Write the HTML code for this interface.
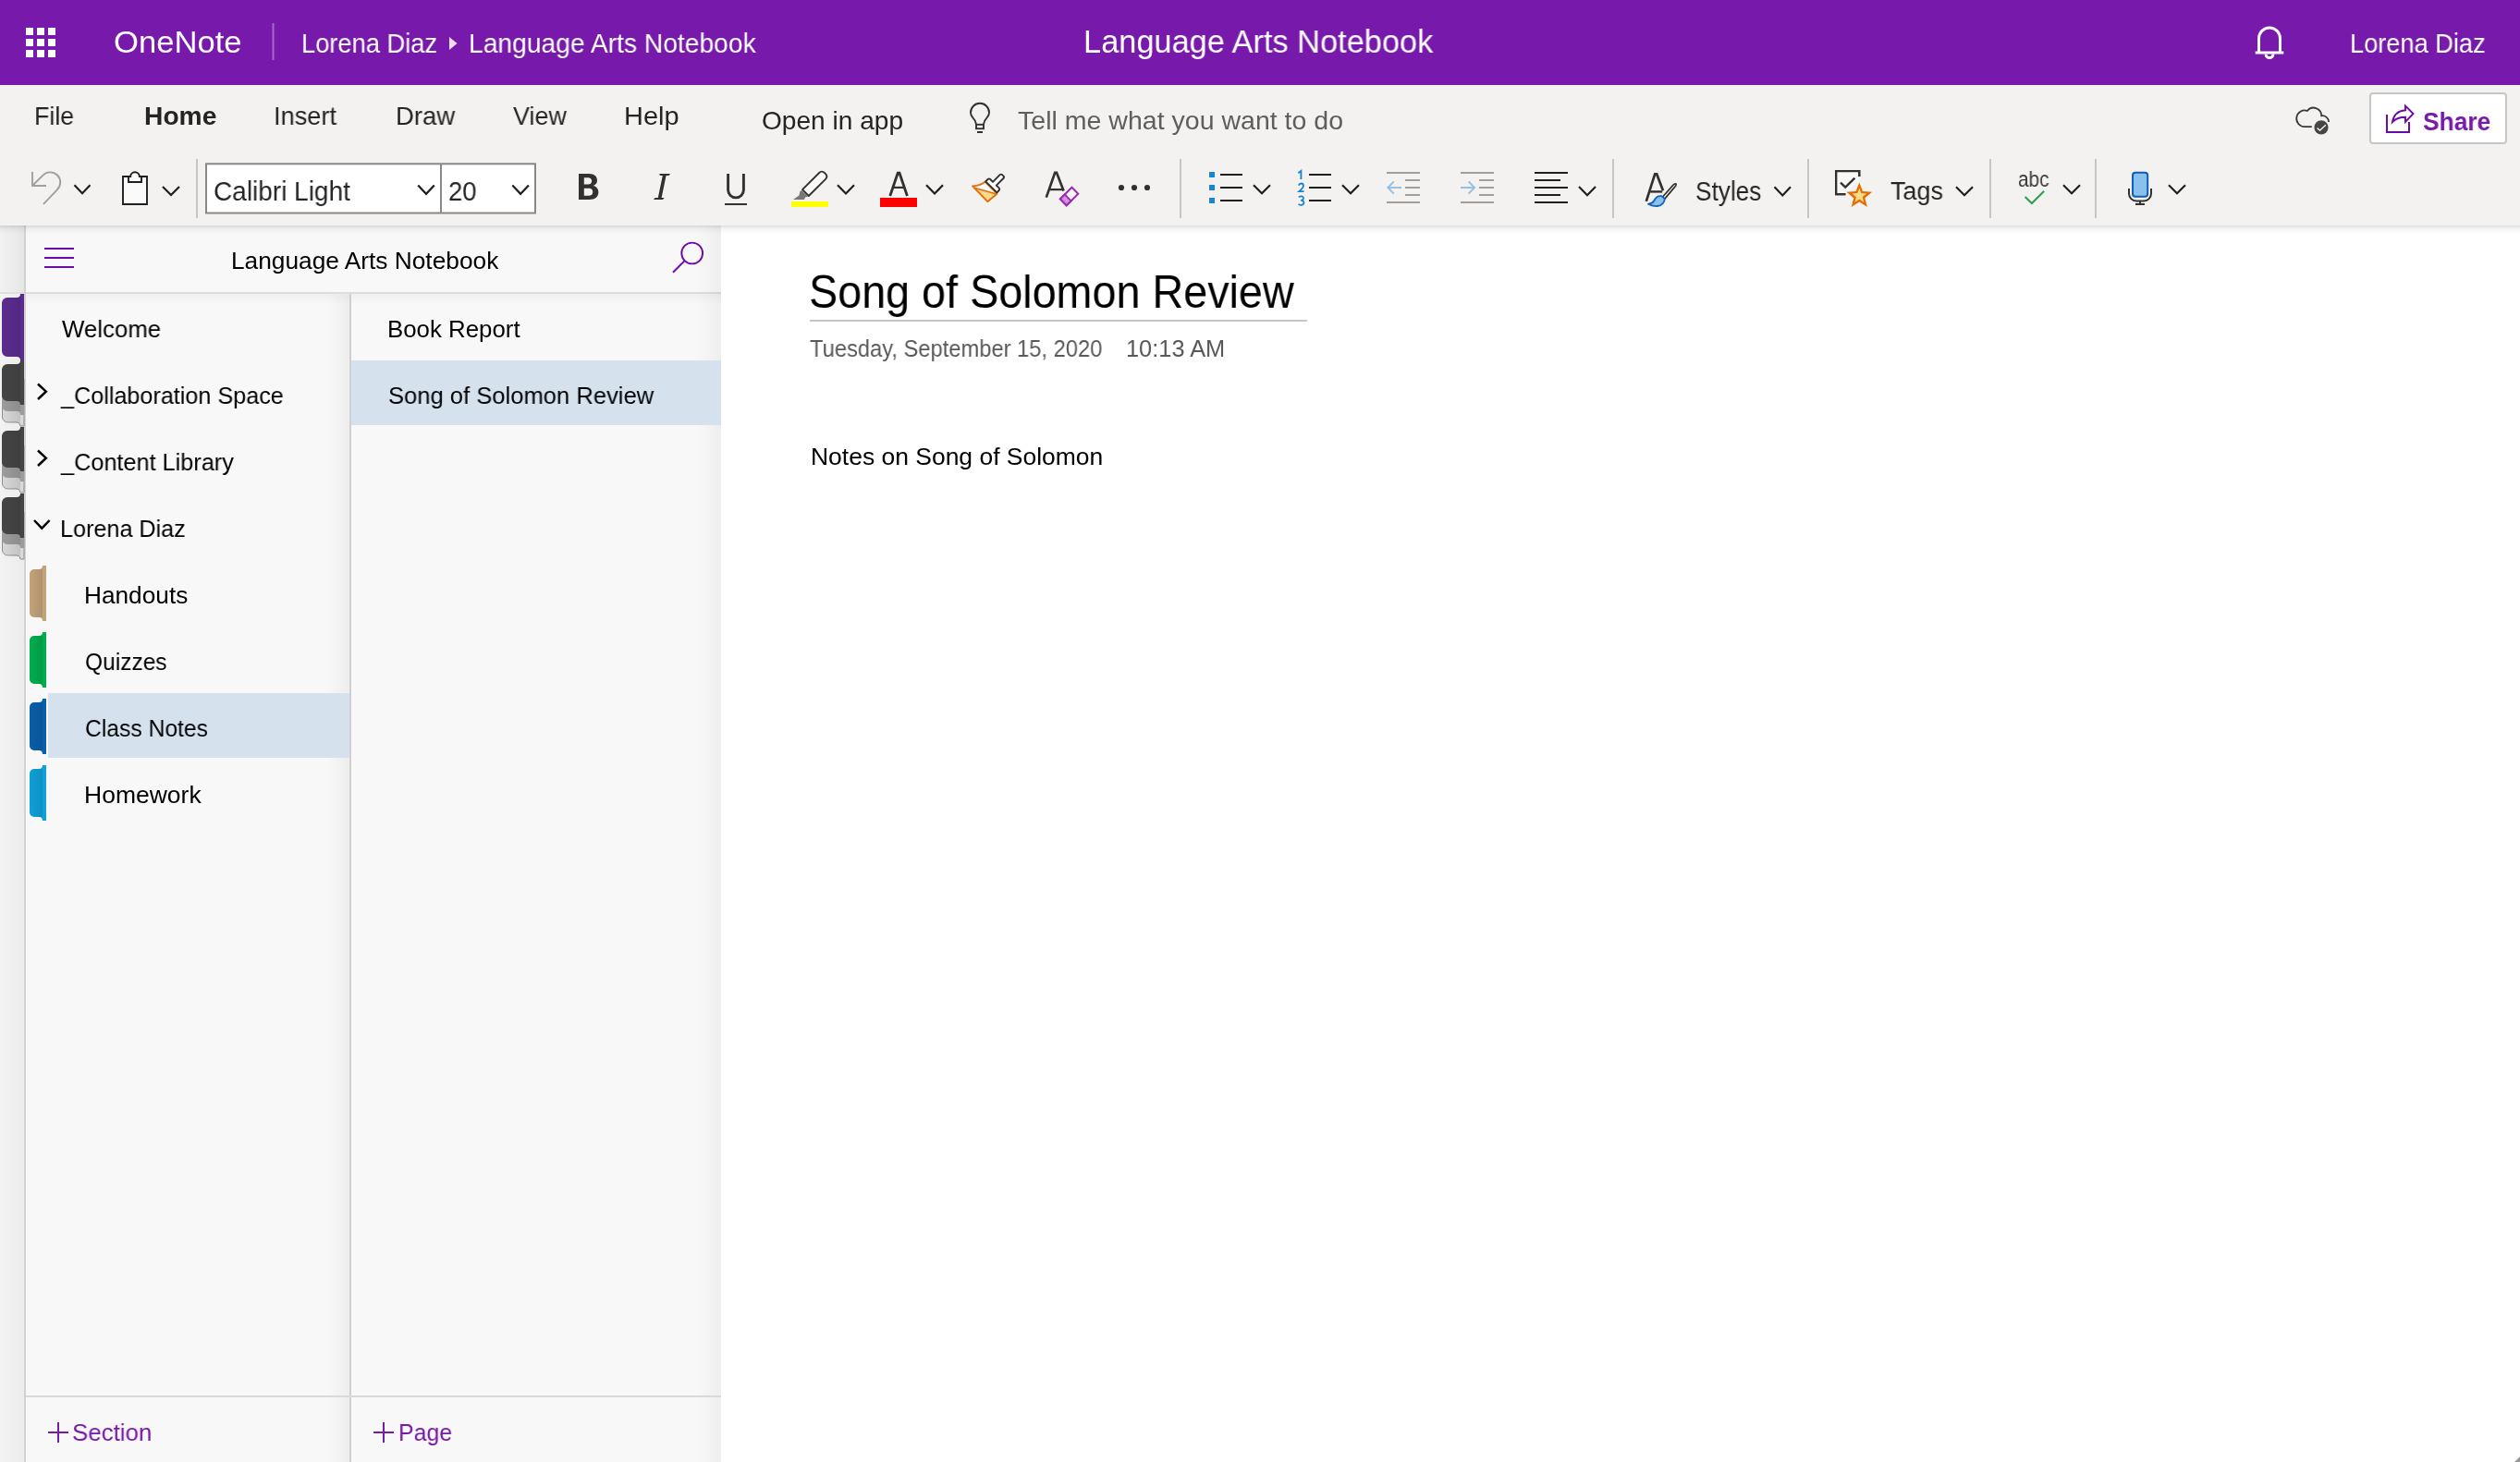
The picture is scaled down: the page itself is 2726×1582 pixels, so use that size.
<!DOCTYPE html><html><head><meta charset='utf-8'><style>
*{margin:0;padding:0;box-sizing:border-box}
html,body{width:2726px;height:1582px;overflow:hidden;background:#fff;font-family:'Liberation Sans',sans-serif}
.a{position:absolute}
.t{position:absolute;white-space:nowrap;transform-origin:0 0;will-change:transform}
svg{position:absolute;overflow:visible}
</style></head><body>
<div class="a" style="left:0;top:0;width:2726px;height:92px;background:#7719aa"></div>
<div class="a" style="left:0;top:92px;width:2726px;height:152px;background:#f3f2f1"></div>
<!-- left rail -->
<div class="a" style="left:0;top:244px;width:26px;height:1338px;background:linear-gradient(90deg,#f2f2f2,#e6e6e6)"></div>
<div class="a" style="left:0;top:318px;width:26px;height:1264px;background:linear-gradient(90deg,#f3f3f3,#ececec)"></div>
<div class="a" style="left:0;top:316px;width:26px;height:2px;background:#dedede"></div>
<div class="a" style="left:26px;top:244px;width:2px;height:1338px;background:#d2d2d2"></div>
<!-- nav pane -->
<div class="a" style="left:28px;top:244px;width:752px;height:1338px;background:#f8f8f8"></div>
<div class="a" style="left:28px;top:316px;width:752px;height:2px;background:#dddddd"></div>
<div class="a" style="left:28px;top:318px;width:752px;height:12px;background:linear-gradient(180deg,rgba(0,0,0,0.035),rgba(0,0,0,0))"></div>
<div class="a" style="left:354px;top:318px;width:24px;height:1264px;background:linear-gradient(90deg,rgba(0,0,0,0),rgba(0,0,0,0.045))"></div>
<div class="a" style="left:378px;top:318px;width:2px;height:1264px;background:#d0d0d0"></div>
<div class="a" style="left:754px;top:244px;width:26px;height:1338px;background:linear-gradient(90deg,rgba(0,0,0,0),rgba(0,0,0,0.045))"></div>
<div class="a" style="left:28px;top:1510px;width:752px;height:2px;background:#d9d9d9"></div>
<!-- selected rows -->
<div class="a" style="left:52px;top:750px;width:326px;height:70px;background:#d5e2ee"></div>
<div class="a" style="left:380px;top:390px;width:400px;height:70px;background:#d5e2ee"></div>
<!-- ribbon shadow -->
<div class="a" style="left:0;top:244px;width:2726px;height:9px;background:linear-gradient(180deg,rgba(0,0,0,0.13),rgba(0,0,0,0.04) 40%,rgba(0,0,0,0))"></div>
<!-- title underline -->
<div class="a" style="left:876px;top:346px;width:538px;height:2px;background:#c4c6ca"></div>
<svg width="2726" height="1582" viewBox="0 0 2726 1582" style="left:0;top:0;position:absolute"><rect x="2564" y="101" width="147" height="54" rx="3" fill="#fff" stroke="#c8c6c4" stroke-width="2"/>
<rect x="223" y="177.3" width="356" height="53.2" fill="#fff" stroke="#8a8886" stroke-width="2"/></svg>
<div class="t" id="onenote" style="left:122.61px;top:29.31px;font-size:33.89px;line-height:33.89px;color:#fff;transform:scaleX(1.0221);">OneNote</div>
<div class="t" id="bc1" style="left:326.01px;top:33.31px;font-size:28.61px;line-height:28.61px;color:#fff;transform:scaleX(0.9533);">Lorena Diaz</div>
<div class="t" id="bc2" style="left:506.74px;top:33.31px;font-size:28.61px;line-height:28.61px;color:#fff;transform:scaleX(0.9862);">Language Arts Notebook</div>
<div class="t" id="center" style="left:1172.25px;top:28.01px;font-size:34.44px;line-height:34.44px;color:#fff;transform:scaleX(0.9983);">Language Arts Notebook</div>
<div class="t" id="user" style="left:2541.82px;top:33.31px;font-size:28.61px;line-height:28.61px;color:#fff;transform:scaleX(0.9507);">Lorena Diaz</div>
<div class="t" id="t_file" style="left:36.86px;top:112.00px;font-size:27.78px;line-height:27.78px;color:#252423;transform:scaleX(0.9631);">File</div>
<div class="t" id="t_home" style="left:156.31px;top:111.01px;font-size:28.19px;line-height:28.19px;color:#252423;font-weight:700;transform:scaleX(1.0013);">Home</div>
<div class="t" id="t_insert" style="left:295.94px;top:112.00px;font-size:27.78px;line-height:27.78px;color:#252423;transform:scaleX(0.9788);">Insert</div>
<div class="t" id="t_draw" style="left:427.59px;top:112.00px;font-size:27.78px;line-height:27.78px;color:#252423;transform:scaleX(0.9903);">Draw</div>
<div class="t" id="t_view" style="left:555.00px;top:112.00px;font-size:27.78px;line-height:27.78px;color:#252423;transform:scaleX(0.9679);">View</div>
<div class="t" id="t_help" style="left:675.08px;top:112.00px;font-size:27.78px;line-height:27.78px;color:#252423;transform:scaleX(1.0428);">Help</div>
<div class="t" id="t_open" style="left:823.87px;top:117.00px;font-size:27.78px;line-height:27.78px;color:#252423;transform:scaleX(1.0118);">Open in app</div>
<div class="t" id="tellme" style="left:1100.63px;top:116.72px;font-size:27.92px;line-height:27.92px;color:#605e5c;transform:scaleX(1.0224);">Tell me what you want to do</div>
<div class="t" id="share" style="left:2621.47px;top:116.51px;font-size:28.47px;line-height:28.47px;color:#7719aa;font-weight:700;transform:scaleX(0.9254);">Share</div>
<div class="t" id="fontname" style="left:231.40px;top:192.50px;font-size:28.89px;line-height:28.89px;color:#252423;transform:scaleX(0.9698);">Calibri Light</div>
<div class="t" id="fontsize" style="left:485.42px;top:192.50px;font-size:28.89px;line-height:28.89px;color:#252423;transform:scaleX(0.9516);">20</div>
<div class="t" id="styles" style="left:1833.95px;top:193.01px;font-size:29.17px;line-height:29.17px;color:#252423;transform:scaleX(0.8995);">Styles</div>
<div class="t" id="tags" style="left:2045.46px;top:192.01px;font-size:28.19px;line-height:28.19px;color:#252423;transform:scaleX(0.9563);">Tags</div>
<div class="t" id="navtitle" style="left:249.90px;top:269.71px;font-size:25.42px;line-height:25.42px;color:#000;transform:scaleX(1.0343);">Language Arts Notebook</div>
<div class="t" id="s_welcome" style="left:66.60px;top:344.01px;font-size:25.97px;line-height:25.97px;color:#000;transform:scaleX(0.9941);">Welcome</div>
<div class="t" id="s_collab" style="left:66.10px;top:416.01px;font-size:25.97px;line-height:25.97px;color:#000;transform:scaleX(0.9697);">_Collaboration Space</div>
<div class="t" id="s_content" style="left:66.30px;top:488.01px;font-size:25.97px;line-height:25.97px;color:#000;transform:scaleX(0.9733);">_Content Library</div>
<div class="t" id="s_lorena" style="left:65.19px;top:560.01px;font-size:25.97px;line-height:25.97px;color:#000;transform:scaleX(0.9699);">Lorena Diaz</div>
<div class="t" id="s_handouts" style="left:90.90px;top:632.01px;font-size:25.97px;line-height:25.97px;color:#000;transform:scaleX(1.0100);">Handouts</div>
<div class="t" id="s_quizzes" style="left:92.02px;top:704.01px;font-size:25.97px;line-height:25.97px;color:#000;transform:scaleX(0.9435);">Quizzes</div>
<div class="t" id="s_class" style="left:91.77px;top:776.01px;font-size:25.97px;line-height:25.97px;color:#000;transform:scaleX(0.9498);">Class Notes</div>
<div class="t" id="s_homework" style="left:90.88px;top:848.01px;font-size:25.97px;line-height:25.97px;color:#000;transform:scaleX(1.0205);">Homework</div>
<div class="t" id="p_book" style="left:418.53px;top:344.00px;font-size:25.69px;line-height:25.69px;color:#000;transform:scaleX(1.0055);">Book Report</div>
<div class="t" id="p_song" style="left:419.58px;top:416.10px;font-size:25.97px;line-height:25.97px;color:#000;transform:scaleX(0.9849);">Song of Solomon Review</div>
<div class="t" id="f_section" style="left:78.16px;top:1537.41px;font-size:26.53px;line-height:26.53px;color:#7719aa;transform:scaleX(0.9754);">Section</div>
<div class="t" id="f_page" style="left:430.80px;top:1537.41px;font-size:26.53px;line-height:26.53px;color:#7719aa;transform:scaleX(0.9377);">Page</div>
<div class="t" id="title" style="left:874.93px;top:292.00px;font-size:49.79px;line-height:49.79px;color:#000;transform:scaleX(0.9386);">Song of Solomon Review</div>
<div class="t" id="date" style="left:876.32px;top:365.00px;font-size:25.18px;line-height:25.18px;color:#595959;transform:scaleX(0.9423);">Tuesday, September 15, 2020</div>
<div class="t" id="time" style="left:1218.22px;top:365.00px;font-size:25.18px;line-height:25.18px;color:#595959;transform:scaleX(1.0084);">10:13 AM</div>
<div class="t" id="notes" style="left:877.08px;top:482.31px;font-size:25.32px;line-height:25.32px;color:#000;transform:scaleX(1.0455);">Notes on Song of Solomon</div>
<div class="t" id="abc" style="left:2183.38px;top:182.81px;font-size:23.06px;line-height:23.06px;color:#3b3a39;transform:scaleX(0.9000);">abc</div>
<svg width="2726" height="1582" viewBox="0 0 2726 1582" style="left:0;top:0;position:absolute"><defs><linearGradient id="tg" x1="0" y1="0" x2="1" y2="0"><stop offset="0" stop-color="#000" stop-opacity="0"/><stop offset="1" stop-color="#000" stop-opacity="0.1"/></linearGradient></defs><rect x="28" y="30" width="8" height="8" fill="#fff"/>
<rect x="40" y="30" width="8" height="8" fill="#fff"/>
<rect x="52" y="30" width="8" height="8" fill="#fff"/>
<rect x="28" y="42" width="8" height="8" fill="#fff"/>
<rect x="40" y="42" width="8" height="8" fill="#fff"/>
<rect x="52" y="42" width="8" height="8" fill="#fff"/>
<rect x="28" y="54" width="8" height="8" fill="#fff"/>
<rect x="40" y="54" width="8" height="8" fill="#fff"/>
<rect x="52" y="54" width="8" height="8" fill="#fff"/>
<rect x="294.5" y="25" width="2" height="40" fill="#fff" opacity="0.35"/>
<path d="M486 40 L494.5 47 L486 54 Z" fill="#efdcef"/>
<path d="M2443.5 57 V41.5 A11.5 11.5 0 0 1 2466.5 41.5 V57" fill="none" stroke="#fff" stroke-width="3"/>
<path d="M2439.7 57 H2470.3" fill="none" stroke="#fff" stroke-width="3"/>
<path d="M2451 58.5 A4 4 0 0 0 2459 58.5" fill="none" stroke="#fff" stroke-width="3"/>
<path d="M1056 134.5 C1055.6 131.2 1054.2 129.2 1052.2 127.2 C1050.4 125.2 1050 123.2 1050 121.8 A10 10 0 0 1 1070 121.8 C1070 123.2 1069.6 125.2 1067.8 127.2 C1065.8 129.2 1064.4 131.2 1064 134.5" fill="none" stroke="#323130" stroke-width="1.9"/>
<rect x="1056" y="134.8" width="8" height="4.4" fill="none" stroke="#323130" stroke-width="1.9"/>
<rect x="1057" y="142" width="6" height="2" fill="#323130"/>
<path d="M2500.8 137.1 H2493 A8.8 8.8 0 1 1 2495.8 119.95 A8.6 8.6 0 0 1 2511.2 125.3 A7 7 0 0 1 2519.2 132" fill="none" stroke="#3a3938" stroke-width="1.8" stroke-linejoin="miter"/>
<circle cx="2511" cy="137.8" r="8.3" fill="#f3f2f1"/>
<circle cx="2511" cy="137.8" r="7.6" fill="#484644"/>
<path d="M2506.6 138.4 L2509.6 141.2 L2515.8 135.2" fill="none" stroke="#fff" stroke-width="1.3"/>
<path d="M2582 124 V143 H2606 V132" fill="none" stroke="#6c0aa8" stroke-width="2"/>
<path d="M2588 132 C2589.2 124.5 2594 119.8 2602 119.2 V114.5 L2610.5 123 L2602 131.8 V126.8 C2596.5 126.8 2591.5 128.5 2588 132 Z" fill="none" stroke="#6c0aa8" stroke-width="1.9" stroke-linejoin="miter"/>
<rect x="212" y="172" width="2" height="64" fill="#c8c6c4"/>
<rect x="1276" y="172" width="2" height="64" fill="#c8c6c4"/>
<rect x="1744" y="172" width="2" height="64" fill="#c8c6c4"/>
<rect x="1955" y="172" width="2" height="64" fill="#c8c6c4"/>
<rect x="2152" y="172" width="2" height="64" fill="#c8c6c4"/>
<rect x="2266" y="172" width="2" height="64" fill="#c8c6c4"/>
<path d="M35 186 V201 H50" fill="none" stroke="#a19f9d" stroke-width="1.9"/>
<path d="M35.5 200.5 L46.2 189.8 A11 11 0 1 1 61.8 205.3 L47 220.8" fill="none" stroke="#a19f9d" stroke-width="1.9"/>
<path d="M80.5 200.2 L89.0 209.2 L97.5 200.2" fill="none" stroke="#201f1e" stroke-width="2.2" stroke-linecap="butt" stroke-linejoin="miter"/>
<path d="M133 191 H141.2 A4.8 4.8 0 0 1 150.8 191 H159 V221 H133 Z" fill="#fafafa" stroke="#201f1e" stroke-width="1.9"/>
<path d="M139 191.5 V197 H153 V191.5" fill="none" stroke="#201f1e" stroke-width="1.9"/>
<path d="M176 202 L185.0 211 L194 202" fill="none" stroke="#201f1e" stroke-width="2.2" stroke-linecap="butt" stroke-linejoin="miter"/>
<rect x="476" y="177" width="2" height="54" fill="#8a8886"/>
<path d="M452.2 200.5 L461.0 209.8 L469.8 200.5" fill="none" stroke="#201f1e" stroke-width="2.2" stroke-linecap="butt" stroke-linejoin="miter"/>
<path d="M554.3 200.5 L563.0999999999999 209.8 L571.9 200.5" fill="none" stroke="#201f1e" stroke-width="2.2" stroke-linecap="butt" stroke-linejoin="miter"/>
<path fill-rule="evenodd" fill="#323130" d="M626 188 H637.2 C643 188 646 191 646 195.2 C646 198 644.5 200 641.8 200.9 C645.2 201.6 647.4 204.3 647.4 208 C647.4 213 643.6 216 637.4 216 H626 Z M631.8 192.3 V199.5 H636 C638.6 199.5 640.1 198.2 640.1 195.9 C640.1 193.6 638.6 192.3 636 192.3 Z M631.8 203.8 V211.7 H637 C639.7 211.7 641.2 210.3 641.2 207.8 C641.2 205.3 639.7 203.8 637 203.8 Z"/>
<path fill="#323130" d="M713.2 188 H725 L723.6 190 H720.6 L715.6 214 H718.6 L717 216 H707 L708.6 214 H711.8 L716.8 190 H714 Z"/>
<path d="M787.6 188 V205.5 A8.4 8.4 0 0 0 804.4 205.5 V188" fill="none" stroke="#323130" stroke-width="2.9"/>
<rect x="784" y="220" width="24" height="2" fill="#323130"/>
<path d="M868 205.2 L886.2 187 C888 185.2 890 185.2 891.8 187 L893 188.2 C894.8 190 894.8 192 893 193.8 L874.8 212 Z" fill="#fafafa" stroke="#323130" stroke-width="1.9" stroke-linejoin="round"/>
<path d="M867.2 206 L874 212.8 L871 213.5 L870 216 H858 L864.4 211.4 L865.4 207 Z" fill="#797775"/>
<rect x="856" y="218" width="40" height="6" fill="#ffff00"/>
<path d="M906 200.3 L915.0 209.5 L924 200.3" fill="none" stroke="#201f1e" stroke-width="2.2" stroke-linecap="butt" stroke-linejoin="miter"/>
<path d="M962.8 212 L971.2 187.2 H973 L981.4 212" fill="none" stroke="#323130" stroke-width="2.8" stroke-linejoin="miter"/>
<rect x="965.5" y="201.8" width="13" height="2.2" fill="#323130"/>
<rect x="952" y="214" width="40" height="10" fill="#ff0000"/>
<path d="M1002 200.3 L1011.0 209.5 L1020 200.3" fill="none" stroke="#201f1e" stroke-width="2.2" stroke-linecap="butt" stroke-linejoin="miter"/>
<path d="M1052 201.4 C1058 201 1062.5 199.5 1065.6 196.6 L1078.5 209.6 L1068.4 218 Z" fill="#fafafa" stroke="#e3700b" stroke-width="1.9" stroke-linejoin="round"/>
<path d="M1054 203.2 L1078 210 L1068.4 218 Z" fill="#f9d98e" stroke="#e3700b" stroke-width="1.7" stroke-linejoin="round"/>
<path d="M1066.2 196.4 L1068.6 194 C1069.4 193.2 1070.4 193.2 1071.2 194 L1074 196.8 L1081.6 189.2 C1082.4 188.4 1083.4 188.4 1084.2 189.2 L1085.4 190.4 C1086.2 191.2 1086.2 192.2 1085.4 193 L1077.8 200.6 L1080.6 203.4 C1081.4 204.2 1081.4 205.2 1080.6 206 L1078.4 208.4 Z" fill="#fafafa" stroke="#323130" stroke-width="1.9" stroke-linejoin="round"/>
<path d="M1131.8 213.6 L1141.2 186.8 H1143 L1150.6 206.4" fill="none" stroke="#323130" stroke-width="2.7"/>
<rect x="1134.6" y="204" width="15.2" height="2.2" fill="#323130"/>
<path d="M1159.5 202.7 L1166.3 209.7 L1153.7 222.3 L1146.9 215.3 Z" fill="#f7f7f7" stroke="#9b2ab0" stroke-width="2" stroke-linejoin="miter"/>
<path d="M1146.9 215.3 L1151.8 210.4 L1158.6 217.4 L1153.7 222.3 Z" fill="#d591e0" stroke="#9b2ab0" stroke-width="2" stroke-linejoin="miter"/>
<circle cx="1213" cy="203" r="3.1" fill="#323130"/>
<circle cx="1227" cy="203" r="3.1" fill="#323130"/>
<circle cx="1241" cy="203" r="3.1" fill="#323130"/>
<rect x="1308" y="186" width="6" height="6" fill="#1a86d0"/>
<rect x="1308" y="200" width="6" height="6" fill="#1a86d0"/>
<rect x="1308" y="214" width="6" height="6" fill="#1a86d0"/>
<rect x="1320" y="188" width="24" height="2" fill="#201f1e"/>
<rect x="1320" y="202" width="24" height="2" fill="#201f1e"/>
<rect x="1320" y="216" width="24" height="2" fill="#201f1e"/>
<path d="M1356 200.2 L1365.0 209.3 L1374 200.2" fill="none" stroke="#201f1e" stroke-width="2.2" stroke-linecap="butt" stroke-linejoin="miter"/>
<rect x="1416" y="188" width="24" height="2" fill="#201f1e"/>
<rect x="1416" y="202" width="24" height="2" fill="#201f1e"/>
<rect x="1416" y="216" width="24" height="2" fill="#201f1e"/>
<path d="M1452 200.2 L1461.0 209.3 L1470 200.2" fill="none" stroke="#201f1e" stroke-width="2.2" stroke-linecap="butt" stroke-linejoin="miter"/>
<path d="M1404.4 187.2 L1407.4 184.9 V194" fill="none" stroke="#1a86d0" stroke-width="1.9"/>
<path d="M1404.8 200.6 C1405.4 199.1 1406.5 198.5 1407.5 198.5 C1409.2 198.5 1410 199.6 1410 201 C1410 203.3 1407.6 204.9 1405.2 207.1 H1410.6" fill="none" stroke="#1a86d0" stroke-width="1.8"/>
<path d="M1404.9 213.3 C1405.6 212.7 1406.6 212.4 1407.5 212.4 C1409.1 212.4 1410 213.3 1410 214.6 C1410 215.9 1408.9 216.8 1407.1 216.8 C1409.3 216.8 1410.5 217.8 1410.5 219.3 C1410.5 220.9 1409.2 221.8 1407.4 221.8 C1406.3 221.8 1405.3 221.5 1404.5 221" fill="none" stroke="#1a86d0" stroke-width="1.7"/>
<rect x="1500" y="186" width="36" height="2" fill="#a19f9d"/><rect x="1520" y="194" width="16" height="2" fill="#a19f9d"/><rect x="1520" y="202" width="16" height="2" fill="#a19f9d"/><rect x="1520" y="210" width="16" height="2" fill="#a19f9d"/><rect x="1500" y="218" width="36" height="2" fill="#a19f9d"/><path d="M1500.8 203 H1516" stroke="#93c2e6" stroke-width="2" fill="none"/><path d="M1507.8 196.4 L1501.4 203 L1507.8 209.6" stroke="#93c2e6" stroke-width="2" fill="none"/>
<rect x="1580" y="186" width="36" height="2" fill="#a19f9d"/><rect x="1600" y="194" width="16" height="2" fill="#a19f9d"/><rect x="1600" y="202" width="16" height="2" fill="#a19f9d"/><rect x="1600" y="210" width="16" height="2" fill="#a19f9d"/><rect x="1580" y="218" width="36" height="2" fill="#a19f9d"/><path d="M1580 203 H1595.2" stroke="#93c2e6" stroke-width="2" fill="none"/><path d="M1588.6 196.4 L1595 203 L1588.6 209.6" stroke="#93c2e6" stroke-width="2" fill="none"/>
<rect x="1660" y="186" width="36" height="2" fill="#201f1e"/>
<rect x="1660" y="194" width="28" height="2" fill="#201f1e"/>
<rect x="1660" y="202" width="36" height="2" fill="#201f1e"/>
<rect x="1660" y="210" width="28" height="2" fill="#201f1e"/>
<rect x="1660" y="218" width="36" height="2" fill="#201f1e"/>
<path d="M1708 202 L1717.0 211.2 L1726 202" fill="none" stroke="#201f1e" stroke-width="2.2" stroke-linecap="butt" stroke-linejoin="miter"/>
<path d="M1780.8 217.8 L1790.2 188.4 H1792.2 L1799 206.2" fill="none" stroke="#323130" stroke-width="2.7"/>
<rect x="1785.2" y="206.2" width="13" height="2.4" fill="#323130"/>
<path d="M1798.4 213.2 L1809.8 200.4 C1811.2 199 1812.6 198.6 1813 199.1 C1813.4 199.6 1812.9 201 1811.6 202.4 L1800.6 215.4 Z" fill="#fafafa" stroke="#323130" stroke-width="1.7" stroke-linejoin="round"/>
<path d="M1800.8 215.2 C1800.6 219 1797.8 222.6 1793 223 C1789.4 223.3 1786 222.6 1782.8 220.8 C1786.6 220.4 1788.6 218.8 1790 216 C1791.6 213 1794 211.8 1797.4 212.2 Z" fill="#8ac0ec" stroke="#0f63b8" stroke-width="1.8" stroke-linejoin="round"/>
<path d="M1919.5 202.2 L1928.25 211.4 L1937 202.2" fill="none" stroke="#201f1e" stroke-width="2.2" stroke-linecap="butt" stroke-linejoin="miter"/>
<path d="M2011.2 191 V185.2 H1986.2 V210.2 H1996.4" fill="none" stroke="#323130" stroke-width="2.3"/>
<path d="M1986.8 185.8 H2010.6 V196 L1996 210 H1986.8 Z" fill="#f7f7f7" opacity="0.9"/>
<path d="M2011.2 191 V185.2 H1986.2 V210.2 H1996.4" fill="none" stroke="#323130" stroke-width="2.3"/>
<path d="M1991 197.6 L1996.2 202.6 L2006.4 192.6" fill="none" stroke="#323130" stroke-width="2.3"/>
<polygon points="2011.30,197.60 2015.06,207.02 2025.19,207.69 2017.39,214.18 2019.88,224.01 2011.30,218.60 2002.72,224.01 2005.21,214.18 1997.41,207.69 2007.54,207.02" fill="#e56f00"/>
<polygon points="2011.30,203.80 2013.42,209.09 2019.10,209.47 2014.72,213.11 2016.12,218.63 2011.30,215.60 2006.48,218.63 2007.88,213.11 2003.50,209.47 2009.18,209.09" fill="#f8dc8c"/>
<path d="M2116 202.2 L2125.0 211.2 L2134 202.2" fill="none" stroke="#201f1e" stroke-width="2.2" stroke-linecap="butt" stroke-linejoin="miter"/>
<path d="M2190.6 213 L2197.9 220 L2211.2 206.8" fill="none" stroke="#2e9e48" stroke-width="2"/>
<path d="M2232 200.2 L2241.0 209.2 L2250 200.2" fill="none" stroke="#201f1e" stroke-width="2.2" stroke-linecap="butt" stroke-linejoin="miter"/>
<rect x="2307" y="186.8" width="16.2" height="26" rx="3" fill="#8ac0ec" stroke="#0f5fb2" stroke-width="2"/>
<path d="M2303 204 V209.5 A8 8 0 0 0 2311 217.5 H2319 A8 8 0 0 0 2327 209.5 V204" fill="none" stroke="#323130" stroke-width="2"/>
<rect x="2314" y="217" width="2" height="4" fill="#323130"/>
<rect x="2310" y="220" width="10" height="2" fill="#323130"/>
<path d="M2346 200.2 L2355.0 209.2 L2364 200.2" fill="none" stroke="#201f1e" stroke-width="2.2" stroke-linecap="butt" stroke-linejoin="miter"/>
<rect x="48" y="268" width="32" height="2" fill="#6c0aa8"/>
<rect x="48" y="278" width="32" height="2" fill="#6c0aa8"/>
<rect x="48" y="288" width="32" height="2" fill="#6c0aa8"/>
<circle cx="748.7" cy="274" r="11.4" fill="none" stroke="#6c0aa8" stroke-width="1.9"/>
<path d="M740.4 282.4 L728 294.8" stroke="#6c0aa8" stroke-width="2" fill="none"/>
<path d="M41 415.5 L49.8 423.7 L41 432" fill="none" stroke="#000" stroke-width="2.5"/>
<path d="M41 487.5 L49.8 495.7 L41 504" fill="none" stroke="#000" stroke-width="2.5"/>
<path d="M37 563 L45.3 571.6 L53.6 563" fill="none" stroke="#000" stroke-width="2.5"/>
<path d="M26 318 L26 390 L22 390 A4 4 0 0 0 18 386 L8 386 A6 6 0 0 1 2 380 L2 328 A6 6 0 0 1 8 322 L18 322 A4 4 0 0 0 22 318 Z" fill="#5b2c90"/><path d="M22 322 V386 H8 A6 6 0 0 1 2 380 V328 A6 6 0 0 1 8 322 Z" fill="url(#tg)"/>
<path d="M26 410 L26 461 L22 461 A4 4 0 0 0 18 457 L8.5 457 A6 6 0 0 1 2.5 451 L2.5 420 A6 6 0 0 1 8.5 414 L18 414 A4 4 0 0 0 22 410 Z" fill="#d8d8d8" stroke="#8e8e8e" stroke-width="1"/><path d="M22 414 V457 H8.5 A6 6 0 0 1 2.5 451 V420 A6 6 0 0 1 8.5 414 Z" fill="url(#tg)"/>
<path d="M26 402 L26 449 L22 449 A4 4 0 0 0 18 445 L8 445 A6 6 0 0 1 2 439 L2 412 A6 6 0 0 1 8 406 L18 406 A4 4 0 0 0 22 402 Z" fill="#9c9c9c"/><path d="M22 406 V445 H8 A6 6 0 0 1 2 439 V412 A6 6 0 0 1 8 406 Z" fill="url(#tg)"/>
<path d="M26 390 L26 438 L22 438 A4 4 0 0 0 18 434 L8 434 A6 6 0 0 1 2 428 L2 400 A6 6 0 0 1 8 394 L18 394 A4 4 0 0 0 22 390 Z" fill="#454545"/><path d="M22 394 V434 H8 A6 6 0 0 1 2 428 V400 A6 6 0 0 1 8 394 Z" fill="url(#tg)"/>
<path d="M26 482 L26 533 L22 533 A4 4 0 0 0 18 529 L8.5 529 A6 6 0 0 1 2.5 523 L2.5 492 A6 6 0 0 1 8.5 486 L18 486 A4 4 0 0 0 22 482 Z" fill="#d8d8d8" stroke="#8e8e8e" stroke-width="1"/><path d="M22 486 V529 H8.5 A6 6 0 0 1 2.5 523 V492 A6 6 0 0 1 8.5 486 Z" fill="url(#tg)"/>
<path d="M26 474 L26 521 L22 521 A4 4 0 0 0 18 517 L8 517 A6 6 0 0 1 2 511 L2 484 A6 6 0 0 1 8 478 L18 478 A4 4 0 0 0 22 474 Z" fill="#9c9c9c"/><path d="M22 478 V517 H8 A6 6 0 0 1 2 511 V484 A6 6 0 0 1 8 478 Z" fill="url(#tg)"/>
<path d="M26 462 L26 510 L22 510 A4 4 0 0 0 18 506 L8 506 A6 6 0 0 1 2 500 L2 472 A6 6 0 0 1 8 466 L18 466 A4 4 0 0 0 22 462 Z" fill="#454545"/><path d="M22 466 V506 H8 A6 6 0 0 1 2 500 V472 A6 6 0 0 1 8 466 Z" fill="url(#tg)"/>
<path d="M26 554 L26 605 L22 605 A4 4 0 0 0 18 601 L8.5 601 A6 6 0 0 1 2.5 595 L2.5 564 A6 6 0 0 1 8.5 558 L18 558 A4 4 0 0 0 22 554 Z" fill="#d8d8d8" stroke="#8e8e8e" stroke-width="1"/><path d="M22 558 V601 H8.5 A6 6 0 0 1 2.5 595 V564 A6 6 0 0 1 8.5 558 Z" fill="url(#tg)"/>
<path d="M26 546 L26 593 L22 593 A4 4 0 0 0 18 589 L8 589 A6 6 0 0 1 2 583 L2 556 A6 6 0 0 1 8 550 L18 550 A4 4 0 0 0 22 546 Z" fill="#9c9c9c"/><path d="M22 550 V589 H8 A6 6 0 0 1 2 583 V556 A6 6 0 0 1 8 550 Z" fill="url(#tg)"/>
<path d="M26 534 L26 582 L22 582 A4 4 0 0 0 18 578 L8 578 A6 6 0 0 1 2 572 L2 544 A6 6 0 0 1 8 538 L18 538 A4 4 0 0 0 22 534 Z" fill="#454545"/><path d="M22 538 V578 H8 A6 6 0 0 1 2 572 V544 A6 6 0 0 1 8 538 Z" fill="url(#tg)"/>
<path d="M50 612 L50 672 L46 672 A4 4 0 0 0 42 668 L37 668 A5 5 0 0 1 32 663 L32 621 A5 5 0 0 1 37 616 L42 616 A4 4 0 0 0 46 612 Z" fill="#c3a379"/><path d="M46 616 V668 H37 A5 5 0 0 1 32 663 V621 A5 5 0 0 1 37 616 Z" fill="url(#tg)"/>
<path d="M50 684 L50 744 L46 744 A4 4 0 0 0 42 740 L37 740 A5 5 0 0 1 32 735 L32 693 A5 5 0 0 1 37 688 L42 688 A4 4 0 0 0 46 684 Z" fill="#00ad4e"/><path d="M46 688 V740 H37 A5 5 0 0 1 32 735 V693 A5 5 0 0 1 37 688 Z" fill="url(#tg)"/>
<path d="M50 756 L50 816 L46 816 A4 4 0 0 0 42 812 L37 812 A5 5 0 0 1 32 807 L32 765 A5 5 0 0 1 37 760 L42 760 A4 4 0 0 0 46 756 Z" fill="#0b5ea9"/><path d="M46 760 V812 H37 A5 5 0 0 1 32 807 V765 A5 5 0 0 1 37 760 Z" fill="url(#tg)"/>
<path d="M50 828 L50 888 L46 888 A4 4 0 0 0 42 884 L37 884 A5 5 0 0 1 32 879 L32 837 A5 5 0 0 1 37 832 L42 832 A4 4 0 0 0 46 828 Z" fill="#0fa0d8"/><path d="M46 832 V884 H37 A5 5 0 0 1 32 879 V837 A5 5 0 0 1 37 832 Z" fill="url(#tg)"/>
<path d="M52 1550 H74 M63 1539 V1561" stroke="#7719aa" stroke-width="2" fill="none"/>
<path d="M404 1550 H426 M415 1539 V1561" stroke="#7719aa" stroke-width="2" fill="none"/>
<path d="M2726 1576 L2726 1582 L2720 1582 Z" fill="#9a9a9a"/></svg>
</body></html>
